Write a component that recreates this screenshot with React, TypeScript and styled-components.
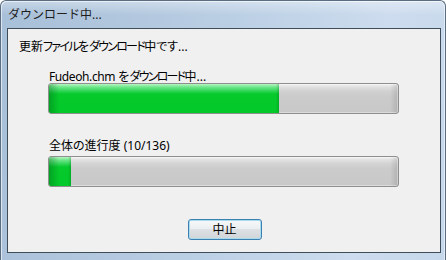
import React from "react";
import styled, { createGlobalStyle } from "styled-components";

const Global = createGlobalStyle`
  html, body { margin: 0; padding: 0; background: #ffffff; }
  body { width: 446px; height: 260px; overflow: hidden; }
  #root { width: 446px; height: 260px; }
`;

const Window = styled.div`
  box-sizing: border-box;
  width: 446px;
  height: 260px;
  border: 1px solid #5b6d80;
  border-bottom: none;
  border-radius: 6px 6px 0 0;
  background:
    linear-gradient(to bottom, rgba(255,255,255,0.35) 0px, rgba(255,255,255,0) 14px),
    linear-gradient(100deg, #a7bfd8 0%, #b5cae0 35%, #c1d4e8 60%, #cddcee 80%, #c6d8eb 100%);
  box-shadow: inset 1px 1px 0 rgba(255,255,255,0.6), inset -1px 0 0 rgba(255,255,255,0.5);
  display: flex;
  flex-direction: column;
  padding: 0 4px 7px 6px;
  font-family: "Noto Sans", "Noto Sans CJK JP", sans-serif;
`;

const TitleBar = styled.div`
  height: 27px;
  display: flex;
  align-items: center;
  padding-left: 1px;
  padding-bottom: 1px;
  box-sizing: border-box;
  font-size: 12px;
  color: #1e1e1e;
`;

const Client = styled.div`
  flex: 1;
  box-sizing: border-box;
  border: 1px solid #3f4c59;
  background: #f0f0f0;
  display: flex;
  flex-direction: column;
  padding: 10px 0 0 0;
  color: #000;
  font-size: 12px;
  font-feature-settings: "palt";
`;

const Kana = styled.span`
  letter-spacing: -1.7px;
`;

const Latin = styled.span`
  letter-spacing: -0.4px;
`;

const Heading = styled.div`
  line-height: 16px;
  height: 16px;
  padding-left: 11px;
  white-space: nowrap;
`;

const Section = styled.div<{ $top: number }>`
  display: flex;
  flex-direction: column;
  padding-left: 40px;
  margin-top: ${(p) => p.$top}px;
`;

const Label = styled.div<{ $gap: number }>`
  line-height: 14px;
  height: 14px;
  padding-left: 1px;
  margin-bottom: ${(p) => p.$gap}px;
  white-space: nowrap;
`;

const Track = styled.div`
  box-sizing: border-box;
  width: 351px;
  height: 31px;
  border: 1px solid #8f8f8f;
  border-radius: 3px;
  overflow: hidden;
  background:
    linear-gradient(to left, rgba(0,0,0,0.12) 0px, rgba(0,0,0,0) 8px),
    linear-gradient(to bottom, #f2f2f2 0px, #e0e0e0 3px, #d2d2d2 7px, #cbcbcb 12px, #c8c8c8 100%);
  box-shadow: inset 0 0 0 1px rgba(255,255,255,0.35);
`;

const Fill = styled.div`
  height: 100%;
  background:
    linear-gradient(to right, rgba(0,90,20,0.35) 0px, rgba(0,90,20,0) 10px),
    linear-gradient(to left, rgba(0,90,20,0.25) 0px, rgba(0,90,20,0) 3px),
    linear-gradient(to bottom, #b8f5c4 0px, #6fe68a 3px, #2fd556 7px, #06c92c 10px, #03c92a 100%);
`;

const Footer = styled.div`
  display: flex;
  justify-content: center;
  margin-top: 32px;
  padding-left: 1px;
`;

const Button = styled.button`
  box-sizing: border-box;
  width: 74px;
  height: 21px;
  padding: 0;
  border: 1px solid #3c7fb1;
  border-radius: 3px;
  background: linear-gradient(to bottom, #f6f8f9 0%, #eceff1 45%, #dde1e4 50%, #d0d5d9 100%);
  box-shadow: inset 0 0 0 1px #a9dbef;
  font-family: "Noto Sans", "Noto Sans CJK JP", sans-serif;
  font-size: 12px;
  line-height: 18px;
  color: #000;
`;

const ProgressBar: React.FC<{ value: number }> = ({ value }) => (
  <Track>
    <Fill style={{ width: `${value}%` }} />
  </Track>
);

export default function App() {
  return (
    <>
      <Global />
      <Window>
        <TitleBar>ダウンロード中...</TitleBar>
        <Client>
          <Heading>
            更新<Kana>ファイル</Kana>を<Kana>ダウンロード</Kana>中です...
          </Heading>
          <Section $top={15}>
            <Label $gap={-1}>
              <Latin>Fudeoh.chm</Latin> を<Kana>ダウンロード</Kana>中...
            </Label>
            <ProgressBar value={65.9} />
          </Section>
          <Section $top={25}>
            <Label $gap={3}>全体の進行度 (10/136)</Label>
            <ProgressBar value={6.3} />
          </Section>
          <Footer>
            <Button>中止</Button>
          </Footer>
        </Client>
      </Window>
    </>
  );
}
